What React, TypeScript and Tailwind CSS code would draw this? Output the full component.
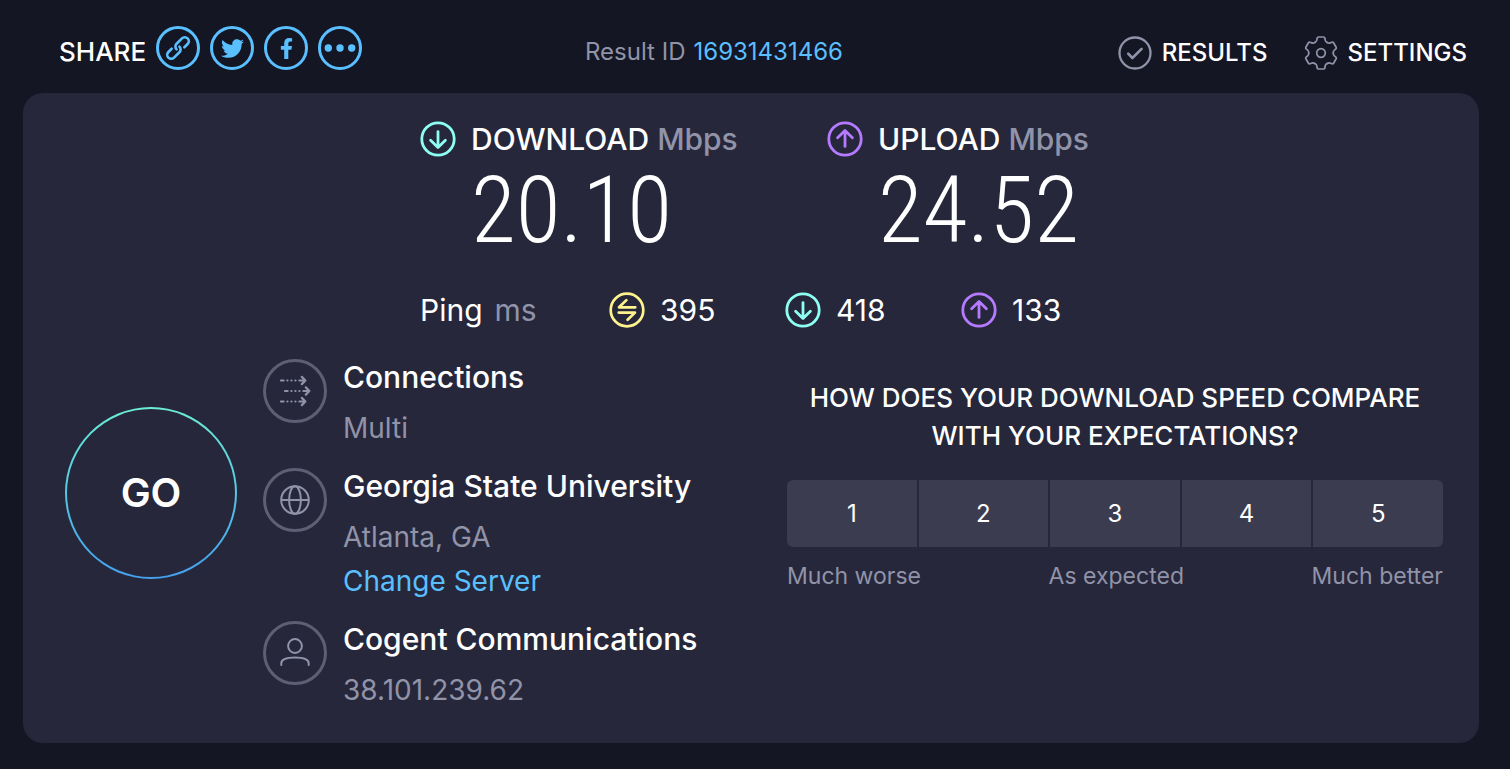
import React, { useState } from 'react';
import { FaTwitter, FaFacebookF } from 'react-icons/fa';

const ratings = [1, 2, 3, 4, 5];

function ArrowCircle({ direction, color }: { direction: 'down' | 'up'; color: string }) {
  return (
    <svg className="size-9 shrink-0" viewBox="0 0 36 36" fill="none" stroke={color} strokeWidth="2.8" aria-hidden="true">
      <circle cx="18" cy="18" r="16.2" />
      <g strokeLinecap="round" strokeLinejoin="round" transform={direction === 'up' ? 'rotate(180 18 18)' : undefined}>
        <path d="M18 10.6v15.6M10.6 19.2 18 26.4l7.4-7.2" />
      </g>
    </svg>
  );
}

function PingCircle() {
  return (
    <svg className="size-9 shrink-0" viewBox="0 0 36 36" fill="none" stroke="#fff38e" strokeWidth="2.7" aria-hidden="true">
      <circle cx="18" cy="18" r="16.3" />
      <path d="M26.3 15.3H10l7.4-7.2M9.7 20.6H26l-7.4 7.2" strokeLinecap="round" strokeLinejoin="round" />
    </svg>
  );
}

function LinkIcon() {
  return (
    <svg className="size-7 shrink-0" viewBox="-14 -14 28 28" fill="none" stroke="currentColor" strokeWidth="2.6" strokeLinecap="round" aria-hidden="true">
      <g transform="rotate(-45)">
        <path d="M5 4H9.6A4 4 0 0 0 9.6-4H2A4 4 0 0 0-2 0" />
        <path d="M-5-4H-9.6A4 4 0 0 0-9.6 4H-2A4 4 0 0 0 2 0" />
      </g>
    </svg>
  );
}

function DotsIcon() {
  return (
    <svg className="w-8 h-2" viewBox="0 0 32 8" fill="currentColor" aria-hidden="true">
      <circle cx="4.3" cy="4" r="3.7" />
      <circle cx="16" cy="4" r="3.7" />
      <circle cx="27.7" cy="4" r="3.7" />
    </svg>
  );
}

function CheckIcon() {
  return (
    <svg className="size-[34px]" viewBox="0 0 34 34" fill="none" stroke="#9193a8" strokeWidth="2.3" aria-hidden="true">
      <circle cx="17" cy="17" r="15.5" />
      <path d="m10.2 17.6 4.2 4.4 9.2-9.2" strokeWidth="2.6" strokeLinecap="round" strokeLinejoin="round" />
    </svg>
  );
}

// one tooth with half a valley on each side, repeated every 60 degrees
const TOOTH = 'M-6.1-10.6Q-4.4-11.6-4.2-13L-3.8-15Q-3.6-16-2.6-16H2.6Q3.6-16 3.8-15L4.2-13Q4.4-11.6 6.1-10.6';

function GearIcon() {
  return (
    <svg className="size-[34px]" viewBox="-17 -17 34 34" fill="none" stroke="#9193a8" strokeWidth="1.7" strokeLinecap="round" aria-hidden="true">
      {[0, 60, 120, 180, 240, 300].map((angle) => (
        <path key={angle} d={TOOTH} transform={`rotate(${angle})`} />
      ))}
      <circle r="4.3" />
    </svg>
  );
}

function ConnectionsIcon() {
  return (
    <svg className="size-8" viewBox="0 0 32 32" fill="none" stroke="#9193a8" strokeWidth="2.2" strokeLinecap="round" strokeLinejoin="round" aria-hidden="true">
      {[[0, 5.5], [4, 16], [0, 26.5]].map(([x, y]) => (
        <g key={y} transform={`translate(${x} ${y})`}>
          <path d="M2 0h2.6M8.4 0h.1M12.4 0h.1M16.4 0h.1M20.4 0h6M22.8-3.6 26.4 0l-3.6 3.6" />
        </g>
      ))}
    </svg>
  );
}

function GlobeIcon() {
  return (
    <svg className="size-8" viewBox="0 0 32 32" fill="none" stroke="#9193a8" strokeWidth="2" aria-hidden="true">
      <circle cx="16" cy="16" r="13.8" />
      <ellipse cx="16" cy="16" rx="5.9" ry="13.8" />
      <path d="M2.2 16h27.6" />
    </svg>
  );
}

function UserIcon() {
  return (
    <svg className="size-8" viewBox="0 0 32 32" fill="none" stroke="#9193a8" strokeWidth="2" strokeLinecap="round" aria-hidden="true">
      <circle cx="16" cy="9" r="6.9" />
      <path d="M2.3 28v-1.7c0-3.8 6-5.8 13.7-5.8s13.7 2 13.7 5.8V28" />
    </svg>
  );
}

function ShareButton({ label, children }: { label: string; children: React.ReactNode }) {
  return (
    <button
      type="button"
      aria-label={label}
      className="flex size-11 items-center justify-center rounded-full border-3 border-[#5abfff] text-[#5abfff]"
    >
      {children}
    </button>
  );
}

function Speed({ direction, label, value, color }: { direction: 'down' | 'up'; label: string; value: string; color: string }) {
  return (
    <div className="flex gap-[15px]">
      <ArrowCircle direction={direction} color={color} />
      <div>
        <h2 className="text-3xl leading-9 font-medium whitespace-nowrap">
          {label} <span className="text-[#9193a8]">Mbps</span>
        </h2>
        <p className="mt-1 font-['Roboto_Condensed','Liberation_Sans_Narrow',sans-serif] text-[92px] leading-[100px] font-light">
          {value}
        </p>
      </div>
    </div>
  );
}

function InfoRow({ icon, title, children }: { icon: React.ReactNode; title: string; children: React.ReactNode }) {
  return (
    <div className="flex gap-4">
      <div className="flex size-16 shrink-0 items-center justify-center rounded-full border-3 border-[#5e5f73]">
        {icon}
      </div>
      <div className="whitespace-nowrap">
        <h3 className="text-3xl leading-9 font-medium">{title}</h3>
        <div className="mt-[11px] text-[28px] leading-[44px] text-[#9193a8]">{children}</div>
      </div>
    </div>
  );
}

export default function App() {
  const [rating, setRating] = useState<number | null>(null);

  return (
    <div className="min-h-screen bg-[#141624] pr-[31px] pb-[26px] pl-[23px] font-['Inter','Noto_Sans',sans-serif] text-white">
      <header className="flex h-[93px] items-center pt-[3px] pr-3 pl-9">
        <div className="flex w-[526px] items-center gap-[10px]">
          <span className="pt-1.5 text-[26px] font-medium">SHARE</span>
          <ShareButton label="Copy link">
            <LinkIcon />
          </ShareButton>
          <ShareButton label="Twitter">
            <FaTwitter size={23} />
          </ShareButton>
          <ShareButton label="Facebook">
            <FaFacebookF size={21} />
          </ShareButton>
          <ShareButton label="More">
            <DotsIcon />
          </ShareButton>
        </div>
        <p className="flex gap-2 pt-2 text-2xl whitespace-nowrap text-[#9193a8]">
          <span>Result ID</span>
          <a href="#result" className="text-[#5abfff]">16931431466</a>
        </p>
        <nav className="ml-auto flex items-center gap-9 pt-[10px] text-2xl font-medium">
          <a href="#results" className="flex items-center gap-[10px]">
            <CheckIcon />
            RESULTS
          </a>
          <a href="#settings" className="flex items-center gap-[10px]">
            <GearIcon />
            SETTINGS
          </a>
        </nav>
      </header>

      <main className="min-h-[650px] rounded-[20px] bg-[#26273b] pt-7 pb-6">
        <div className="mx-auto w-[662px]">
          <div className="grid grid-cols-[407px_1fr]">
            <Speed direction="down" label="DOWNLOAD" value="20.10" color="#8dfff3" />
            <Speed direction="up" label="UPLOAD" value="24.52" color="#b57aff" />
          </div>
          <div className="mt-[31px] grid grid-cols-[189px_176px_176px_1fr] items-center text-3xl leading-9">
            <div className="flex gap-3">
              <span>Ping</span>
              <span className="text-[#9193a8]">ms</span>
            </div>
            <div className="flex gap-[15px]">
              <PingCircle />
              395
            </div>
            <div className="flex gap-[15px]">
              <ArrowCircle direction="down" color="#8dfff3" />
              418
            </div>
            <div className="flex gap-[15px]">
              <ArrowCircle direction="up" color="#b57aff" />
              133
            </div>
          </div>
        </div>

        <div className="mt-[31px] flex pr-9 pl-[42px]">
          <button
            type="button"
            className="mt-12 size-[172px] shrink-0 rounded-full bg-linear-to-b from-[#6ceed2] to-[#459fee] p-[2px]"
          >
            <span className="flex size-full items-center justify-center rounded-full bg-[#26273b] text-[40px] font-semibold">
              GO
            </span>
          </button>

          <div className="ml-[26px] flex w-[524px] shrink-0 flex-col gap-[18px]">
            <InfoRow icon={<ConnectionsIcon />} title="Connections">
              <p>Multi</p>
            </InfoRow>
            <InfoRow icon={<GlobeIcon />} title="Georgia State University">
              <p>Atlanta, GA</p>
              <a href="#servers" className="text-[#5abfff]">Change Server</a>
            </InfoRow>
            <InfoRow icon={<UserIcon />} title="Cogent Communications">
              <p>38.101.239.62</p>
            </InfoRow>
          </div>

          <section className="mt-5 flex-1">
            <h2 className="text-center text-[26px] leading-[38px] font-medium">
              HOW DOES YOUR DOWNLOAD SPEED COMPARE
              <br />
              WITH YOUR EXPECTATIONS?
            </h2>
            <div className="mt-[25px] grid grid-cols-5 gap-[2px] overflow-hidden rounded-md">
              {ratings.map((n) => (
                <button
                  key={n}
                  type="button"
                  aria-pressed={rating === n}
                  onClick={() => setRating(n)}
                  className={`h-[67px] text-2xl ${rating === n ? 'bg-[#5e5f73]' : 'bg-[#3c3c50]'}`}
                >
                  {n}
                </button>
              ))}
            </div>
            <div className="mt-[11px] flex justify-between text-[23px] leading-9 text-[#9193a8]">
              <span>Much worse</span>
              <span>As expected</span>
              <span>Much better</span>
            </div>
          </section>
        </div>
      </main>
    </div>
  );
}
